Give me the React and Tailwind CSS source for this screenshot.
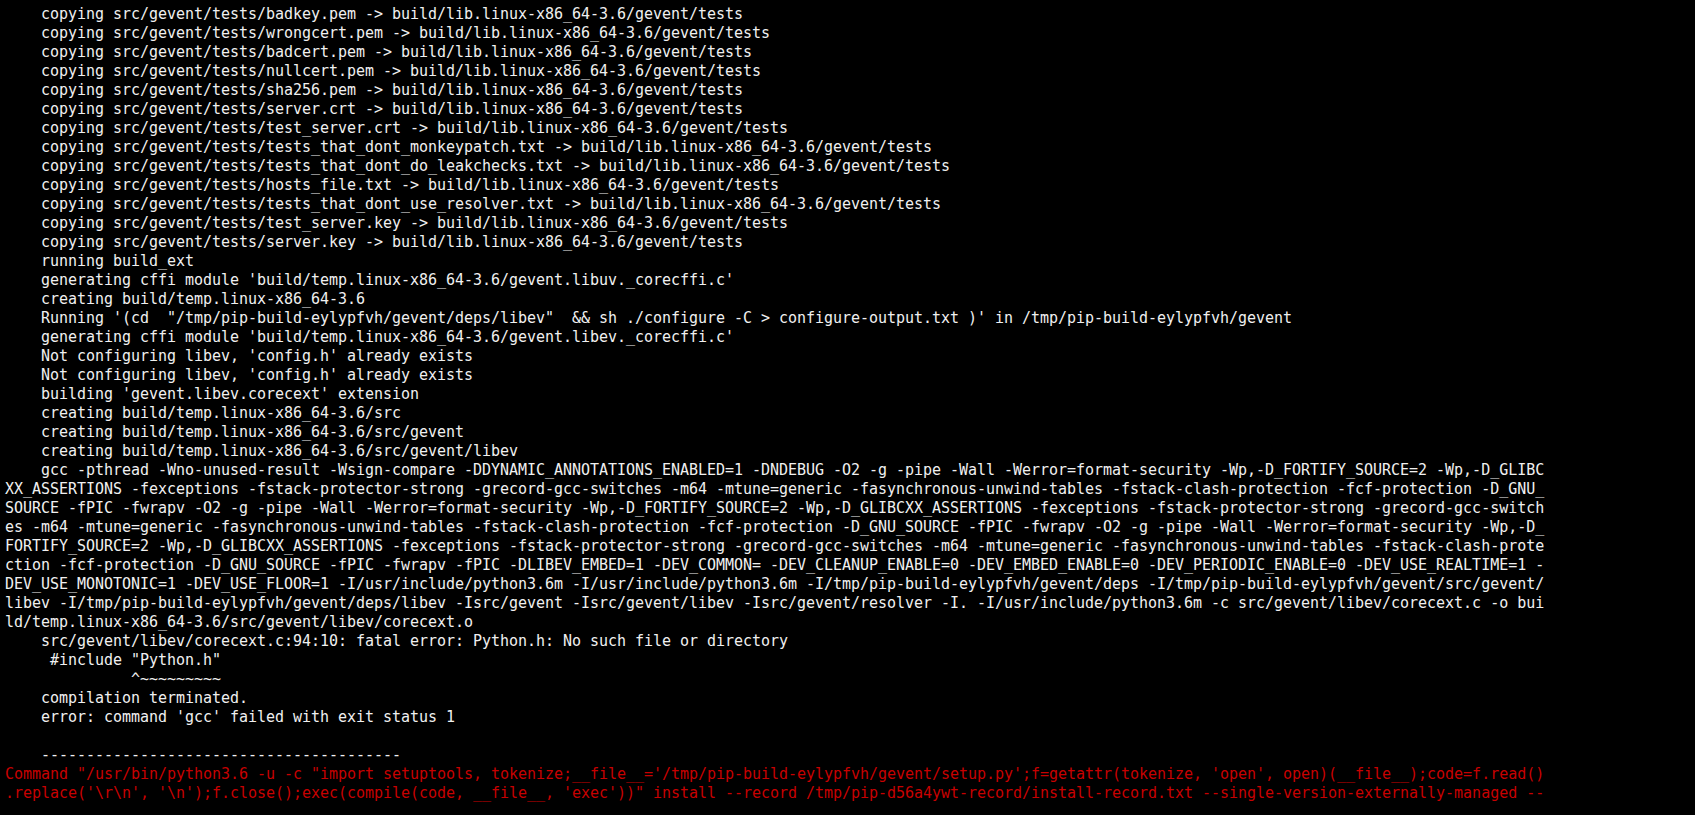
const lines = [
  '    copying src/gevent/tests/badkey.pem -> build/lib.linux-x86_64-3.6/gevent/tests',
  '    copying src/gevent/tests/wrongcert.pem -> build/lib.linux-x86_64-3.6/gevent/tests',
  '    copying src/gevent/tests/badcert.pem -> build/lib.linux-x86_64-3.6/gevent/tests',
  '    copying src/gevent/tests/nullcert.pem -> build/lib.linux-x86_64-3.6/gevent/tests',
  '    copying src/gevent/tests/sha256.pem -> build/lib.linux-x86_64-3.6/gevent/tests',
  '    copying src/gevent/tests/server.crt -> build/lib.linux-x86_64-3.6/gevent/tests',
  '    copying src/gevent/tests/test_server.crt -> build/lib.linux-x86_64-3.6/gevent/tests',
  '    copying src/gevent/tests/tests_that_dont_monkeypatch.txt -> build/lib.linux-x86_64-3.6/gevent/tests',
  '    copying src/gevent/tests/tests_that_dont_do_leakchecks.txt -> build/lib.linux-x86_64-3.6/gevent/tests',
  '    copying src/gevent/tests/hosts_file.txt -> build/lib.linux-x86_64-3.6/gevent/tests',
  '    copying src/gevent/tests/tests_that_dont_use_resolver.txt -> build/lib.linux-x86_64-3.6/gevent/tests',
  '    copying src/gevent/tests/test_server.key -> build/lib.linux-x86_64-3.6/gevent/tests',
  '    copying src/gevent/tests/server.key -> build/lib.linux-x86_64-3.6/gevent/tests',
  '    running build_ext',
  "    generating cffi module 'build/temp.linux-x86_64-3.6/gevent.libuv._corecffi.c'",
  '    creating build/temp.linux-x86_64-3.6',
  "    Running '(cd  \"/tmp/pip-build-eylypfvh/gevent/deps/libev\"  && sh ./configure -C > configure-output.txt )' in /tmp/pip-build-eylypfvh/gevent",
  "    generating cffi module 'build/temp.linux-x86_64-3.6/gevent.libev._corecffi.c'",
  "    Not configuring libev, 'config.h' already exists",
  "    Not configuring libev, 'config.h' already exists",
  "    building 'gevent.libev.corecext' extension",
  '    creating build/temp.linux-x86_64-3.6/src',
  '    creating build/temp.linux-x86_64-3.6/src/gevent',
  '    creating build/temp.linux-x86_64-3.6/src/gevent/libev',
  '    gcc -pthread -Wno-unused-result -Wsign-compare -DDYNAMIC_ANNOTATIONS_ENABLED=1 -DNDEBUG -O2 -g -pipe -Wall -Werror=format-security -Wp,-D_FORTIFY_SOURCE=2 -Wp,-D_GLIBC',
  'XX_ASSERTIONS -fexceptions -fstack-protector-strong -grecord-gcc-switches -m64 -mtune=generic -fasynchronous-unwind-tables -fstack-clash-protection -fcf-protection -D_GNU_',
  'SOURCE -fPIC -fwrapv -O2 -g -pipe -Wall -Werror=format-security -Wp,-D_FORTIFY_SOURCE=2 -Wp,-D_GLIBCXX_ASSERTIONS -fexceptions -fstack-protector-strong -grecord-gcc-switch',
  'es -m64 -mtune=generic -fasynchronous-unwind-tables -fstack-clash-protection -fcf-protection -D_GNU_SOURCE -fPIC -fwrapv -O2 -g -pipe -Wall -Werror=format-security -Wp,-D_',
  'FORTIFY_SOURCE=2 -Wp,-D_GLIBCXX_ASSERTIONS -fexceptions -fstack-protector-strong -grecord-gcc-switches -m64 -mtune=generic -fasynchronous-unwind-tables -fstack-clash-prote',
  'ction -fcf-protection -D_GNU_SOURCE -fPIC -fwrapv -fPIC -DLIBEV_EMBED=1 -DEV_COMMON= -DEV_CLEANUP_ENABLE=0 -DEV_EMBED_ENABLE=0 -DEV_PERIODIC_ENABLE=0 -DEV_USE_REALTIME=1 -',
  'DEV_USE_MONOTONIC=1 -DEV_USE_FLOOR=1 -I/usr/include/python3.6m -I/usr/include/python3.6m -I/tmp/pip-build-eylypfvh/gevent/deps -I/tmp/pip-build-eylypfvh/gevent/src/gevent/',
  'libev -I/tmp/pip-build-eylypfvh/gevent/deps/libev -Isrc/gevent -Isrc/gevent/libev -Isrc/gevent/resolver -I. -I/usr/include/python3.6m -c src/gevent/libev/corecext.c -o bui',
  'ld/temp.linux-x86_64-3.6/src/gevent/libev/corecext.o',
  '    src/gevent/libev/corecext.c:94:10: fatal error: Python.h: No such file or directory',
  '     #include "Python.h"',
  '              ^~~~~~~~~~',
  '    compilation terminated.',
  "    error: command 'gcc' failed with exit status 1",
  '',
  '    ----------------------------------------',
];

const errorLines = [
  "Command \"/usr/bin/python3.6 -u -c \"import setuptools, tokenize;__file__='/tmp/pip-build-eylypfvh/gevent/setup.py';f=getattr(tokenize, 'open', open)(__file__);code=f.read()",
  ".replace('\\r\\n', '\\n');f.close();exec(compile(code, __file__, 'exec'))\" install --record /tmp/pip-d56a4ywt-record/install-record.txt --single-version-externally-managed --",
];

const App = () => {
  return (
    <div className="min-h-screen h-[815px] overflow-hidden bg-black pt-[5px] pl-[5px] font-['DejaVu_Sans_Mono',monospace] text-[15px] leading-[19px] tracking-[-0.03px]">
      {lines.map((line, i) => (
        <div key={i} className="h-[19px] whitespace-pre text-[#f0f0f0]">
          {line}
        </div>
      ))}
      {errorLines.map((line, i) => (
        <div key={'e' + i} className="h-[19px] whitespace-pre text-[#c80000]">
          {line}
        </div>
      ))}
    </div>
  );
};

export default App;
